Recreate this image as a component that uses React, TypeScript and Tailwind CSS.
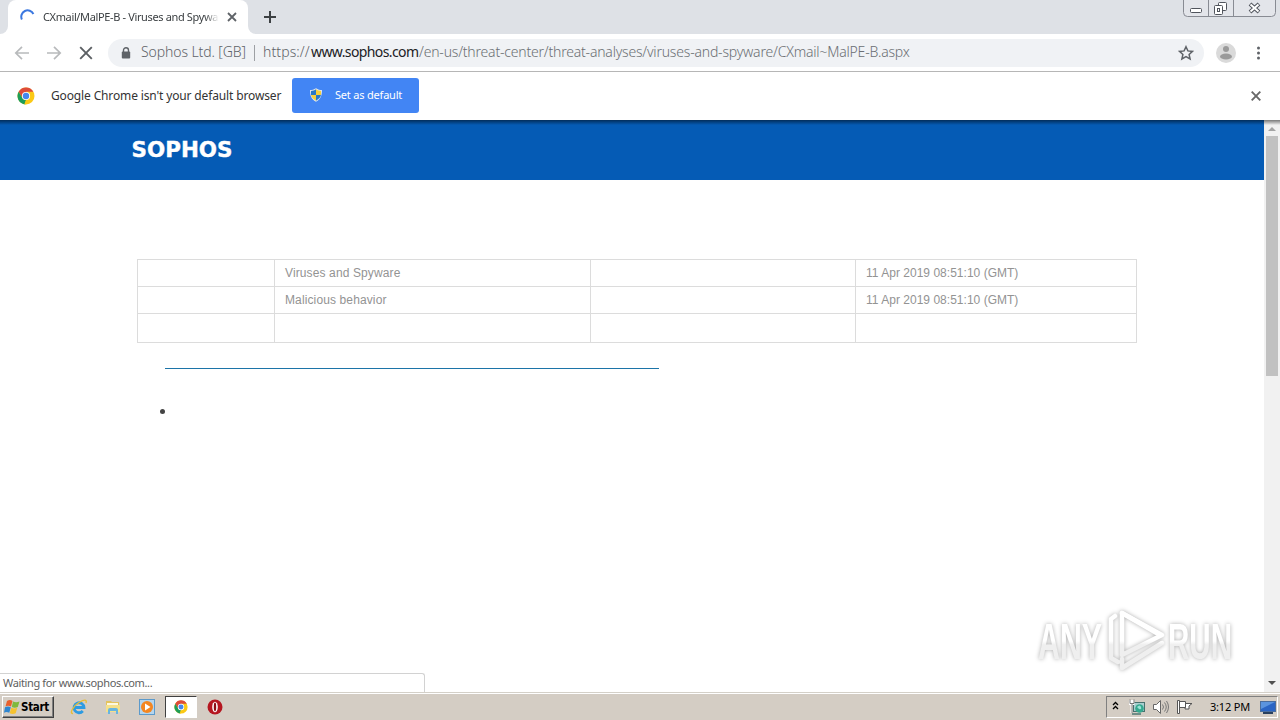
import type { ReactNode } from 'react'

const ROWS = [
    ['', 'Viruses and Spyware', '', '11 Apr 2019 08:51:10 (GMT)'],
    ['', 'Malicious behavior', '', '11 Apr 2019 08:51:10 (GMT)'],
    ['', '', '', ''],
]

export default function App() {
    return (
        <div className="flex h-[720px] w-[1280px] flex-col overflow-hidden bg-white font-['Noto_Sans','DejaVu_Sans',sans-serif]">
            <TabStrip />
            <Toolbar />
            <InfoBar />
            <div className="relative flex h-[572px] shrink-0">
                <Page />
                <Scrollbar />
                <div className="absolute inset-x-0 top-0 h-[5px] bg-linear-to-b from-black/50 to-transparent" />
                <div className="absolute bottom-0 left-0 flex h-[19px] w-[425px] items-center rounded-tr-[3px] border-t border-r border-[#d2d2d2] bg-white pl-[3px] text-[11px] tracking-[-0.37px] whitespace-pre text-[#606060]">
                    Waiting for www.sophos.com...
                </div>
                <Watermark />
            </div>
            <Taskbar />
        </div>
    )
}

function TabStrip() {
    return (
        <div className="flex h-[34px] shrink-0 items-start bg-[#dee1e6]">
            <div className="h-[34px] w-2 bg-white">
                <div className="h-full w-full rounded-br-lg bg-[#dee1e6]" />
            </div>
            <div className="flex h-[34px] w-[240px] items-center rounded-t-lg bg-white pl-3">
                <svg className="h-4 w-4 shrink-0" viewBox="0 0 16 16" fill="none">
                    <path d="M1.9 10.5A6.3 6.3 0 0 1 13.4 5" stroke="#3b78e0" strokeWidth="2" />
                </svg>
                <div className="ml-[7px] w-[176px] overflow-hidden mask-r-from-92% text-[11px] leading-4 tracking-[-0.36px] whitespace-nowrap text-[#3c4043]">
                    CXmail/MalPE-B - Viruses and Spyware
                </div>
                <svg className="ml-[8px] h-[10px] w-[10px] shrink-0" viewBox="0 0 10 10">
                    <path d="M1 1l8 8M9 1l-8 8" stroke="#5f6368" strokeWidth="1.8" />
                </svg>
            </div>
            <div className="h-[34px] w-2 bg-white">
                <div className="h-full w-full rounded-bl-lg bg-[#dee1e6]" />
            </div>
            <svg className="mt-[11px] ml-[8px] h-3 w-3" viewBox="0 0 12 12">
                <path d="M6 0v12M0 6h12" stroke="#3c4043" strokeWidth="2" />
            </svg>
            <svg className="mr-[4px] ml-auto h-[18px] w-[93px]" viewBox="0 0 93 18" fill="none">
                <path d="M.5 0v12.500q0 4 4 4h84q4 0 4-4V0" fill="#e3e5ea" stroke="#888b93" />
                <path d="M25.500 0v16M50.500 0v16" stroke="#888b93" />
                <rect x="7.500" y="8.500" width="11" height="4" rx="1" fill="#fff" stroke="#50545c" />
                <rect x="35.500" y="2.500" width="8" height="8" rx="1" fill="#fff" stroke="#50545c" />
                <rect x="31.500" y="5.500" width="8" height="9" rx="1" fill="#fff" stroke="#50545c" />
                <rect x="34.500" y="8.500" width="2" height="3" stroke="#50545c" />
                <path d="M67 4l9 8M76 4l-9 8" stroke="#50545c" strokeWidth="4" />
                <path d="M67.500 4.400l8 7.200M75.500 4.400l-8 7.200" stroke="#fff" strokeWidth="2" />
            </svg>
        </div>
    )
}

function Toolbar() {
    return (
        <div className="flex h-[38px] shrink-0 items-center border-b border-[#b6b6b6] bg-white">
            <svg className="ml-[14px] h-4 w-[86px] shrink-0" viewBox="0 0 86 16" fill="none">
                <path d="M15 8H2M8 1.800L1.800 8L8 14.200" stroke="#b8babc" strokeWidth="1.700" />
                <path d="M33 8h13M40 1.800L46.200 8L40 14.200" stroke="#b8babc" strokeWidth="1.700" />
                <path d="M66.200 2.200l11.600 11.600M77.800 2.200L66.200 13.800" stroke="#5b5f63" strokeWidth="1.900" />
            </svg>
            <div className="ml-[8px] flex h-7 w-[1096px] items-center rounded-full bg-[#f0f2f5] text-[14px] font-light whitespace-pre text-[#5f6368]">
                <svg className="ml-[13px] h-3 w-[10px] shrink-0" viewBox="0 0 10 12">
                    <path d="M2.500 5V3.200a2.500 2.500 0 0 1 5 0V5" fill="none" stroke="#5f6368" strokeWidth="1.400" />
                    <rect x=".8" y="4.500" width="8.400" height="7" rx="1" fill="#5f6368" />
                </svg>
                <span className="mb-[2px] ml-[10px] w-[106px] tracking-[-0.1px]">Sophos Ltd. [GB]</span>
                <span className="ml-[7px] h-4 w-px bg-[#9da0a4]" />
                <span className="mb-[2px] ml-[8px] w-[48px] tracking-[0.1px]">https://</span>
                <span className="mb-[2px] w-[108px] font-normal tracking-[-0.6px] text-[#202124]">www.sophos.com</span>
                <span className="mb-[2px] tracking-[-0.2px] text-[#6b6f73]">/en-us/threat-center/threat-analyses/viruses-and-spyware/CXmail~MalPE-B.aspx</span>
                <svg className="mr-[10px] ml-auto h-4 w-4 shrink-0" viewBox="0 0 16 16">
                    <path d="M8 1.700l1.900 4.200 4.600.5-3.400 3.100 1 4.500L8 11.700 3.900 14l1-4.500L1.500 6.400l4.600-.5z" fill="none" stroke="#5f6368" strokeWidth="1.500" />
                </svg>
            </div>
            <svg className="ml-[12px] h-5 w-5 shrink-0" viewBox="0 0 20 20">
                <circle cx="10" cy="10" r="10" fill="#dadada" />
                <circle cx="10" cy="6" r="3" fill="#9a9a9a" />
                <ellipse cx="10" cy="13.500" rx="6" ry="3" fill="#9a9a9a" />
            </svg>
            <svg className="ml-[20px] h-[14px] w-1 shrink-0" viewBox="0 0 4 14" fill="#5f6368">
                <circle cx="2.500" cy="2" r="1.500" />
                <circle cx="2.500" cy="7" r="1.500" />
                <circle cx="2.500" cy="12" r="1.500" />
            </svg>
        </div>
    )
}

function InfoBar() {
    return (
        <div className="flex h-12 shrink-0 items-center bg-white">
            <ChromeLogo className="ml-[17px] h-[18px] w-[18px] shrink-0" />
            <span className="ml-[16px] w-[241px] text-[12px] tracking-[-0.14px] whitespace-nowrap text-[#333]">
                Google Chrome isn't your default browser
            </span>
            <button className="mb-[2px] flex h-[35px] w-[127px] items-center rounded-[3px] bg-[#4285f4] text-[11px] tracking-[-0.2px] text-white">
                <svg className="ml-[17px] h-[14px] w-[14px]" viewBox="0 0 14 14">
                    <path d="M7 .3C5 1.700 3 2 1 2c0 5 1 9 6 11.700C12 11 13 7 13 2c-2 0-4-.3-6-1.700z" fill="#dfe7ee" />
                    <path d="M7 1.300C5.500 2.300 4 2.800 2 3v4h5z" fill="#2878c8" />
                    <path d="M7 1.300c1.500 1 3 1.500 5 1.700v4H7z" fill="#f5cf3c" />
                    <path d="M2 7h5v5.700C4 11 2.400 9 2 7z" fill="#f5cf3c" />
                    <path d="M12 7H7v5.700C10 11 11.600 9 12 7z" fill="#2878c8" />
                </svg>
                <span className="ml-[12px] whitespace-nowrap">Set as default</span>
            </button>
            <svg className="mr-[19px] ml-auto h-[10px] w-[10px]" viewBox="0 0 10 10">
                <path d="M.7.700l8.600 8.600M9.300.7L.7 9.300" stroke="#686868" strokeWidth="1.900" />
            </svg>
        </div>
    )
}

function Page() {
    return (
        <div className="h-full w-[1264px] shrink-0 bg-white font-['Liberation_Sans',Arial,sans-serif]">
            <header className="h-[60px] bg-[#055bb5] pt-[18px] pl-[130px]">
                <svg className="h-[24px] w-[110px] overflow-visible" viewBox="0 0 110 24">
                    <text
                        x="1.500"
                        y="18.500"
                        textLength="101"
                        lengthAdjust="spacingAndGlyphs"
                        className="fill-white stroke-white stroke-[0.4px] font-['DejaVu_Sans',sans-serif] text-[22px] font-bold"
                    >
                        SOPHOS
                    </text>
                </svg>
            </header>
            <main className="pt-[79px] pl-[137px]">
                <div className="w-[1000px] border-t border-l border-[#dcdcdc]">
                    {ROWS.map((row, i) => (
                        <div
                            key={i}
                            className={`grid grid-cols-[137px_316px_265px_281px] ${i === 2 ? 'h-[29px]' : 'h-[27px]'}`}
                        >
                            {row.map((cell, j) => (
                                <div
                                    key={j}
                                    className={`flex items-center border-r border-b border-[#dcdcdc] pl-[10px] text-[12px] whitespace-nowrap text-[#939393] ${j === 3 ? 'tracking-[0.02px]' : 'tracking-[0.12px]'}`}
                                >
                                    {cell}
                                </div>
                            ))}
                        </div>
                    ))}
                </div>
                <div className="mt-[25px] ml-[28px] h-px w-[494px] bg-[#1c74a8]" />
                <div className="mt-[40px] ml-[23px] h-[5px] w-[5px] rounded-full bg-[#444]" />
            </main>
        </div>
    )
}

function Scrollbar() {
    return (
        <div className="flex h-full w-4 flex-col items-center bg-[#f1f1f1]">
            <svg className="h-4 w-4 shrink-0" viewBox="0 0 16 16">
                <path d="M4 11h8L8 7z" fill="#a3a3a3" />
            </svg>
            <div className="h-[240px] w-3 bg-[#c1c1c1]" />
            <svg className="mt-auto h-4 w-4 shrink-0" viewBox="0 0 16 16">
                <path d="M4 5h8l-4 4z" fill="#505050" />
            </svg>
        </div>
    )
}

function Watermark() {
    return (
        <svg
            className="absolute top-[484px] left-[1030px] h-[80px] w-[220px] overflow-visible drop-shadow-[0_0_2px_rgba(0,0,0,0.32)]"
            viewBox="0 0 220 80"
        >
            <defs>
                <linearGradient id="fade" x1="0" y1="0" x2="0" y2="74" gradientUnits="userSpaceOnUse">
                    <stop offset="0.5" stopColor="#fff" />
                    <stop offset="0.55" stopColor="#efefef" />
                </linearGradient>
            </defs>
            <g fill="url(#fade)" className="font-['Liberation_Sans',sans-serif] text-[50px] font-bold">
                <text x="8" y="55" textLength="64" lengthAdjust="spacingAndGlyphs">ANY</text>
                <text x="138" y="55" textLength="64" lengthAdjust="spacingAndGlyphs">RUN</text>
            </g>
            <g fill="none" stroke="url(#fade)" strokeWidth="4.500" strokeLinejoin="round" strokeLinecap="round">
                <path d="M92 9v42l40-20z" />
                <path d="M85 12l-4 3v39l7 4M92 9l38 22M92 55v9l40-25" />
            </g>
        </svg>
    )
}

function ChromeLogo({ className }: { className: string }) {
    return (
        <svg className={className} viewBox="0 0 18 18">
            <circle cx="9" cy="9" r="8.500" fill="#fbc915" />
            <path d="M1.600 4.800A8.500 8.500 0 0 1 16.400 4.800H9L5.400 11z" fill="#dd4b3a" />
            <path d="M1.600 4.800L5.400 11a4 4 0 0 0 3.600 2L7.600 17.400A8.500 8.500 0 0 1 1.600 4.800z" fill="#1d9d58" />
            <path d="M9 13l3.600-2-3.800 6.500-1.400-.2z" fill="#fbc915" />
            <circle cx="9" cy="9" r="4.100" fill="#fff" />
            <circle cx="9" cy="9" r="3.200" fill="#4587ed" />
        </svg>
    )
}

function TaskButton({ active, children }: { active?: boolean, children: ReactNode }) {
    return (
        <div
            className={`flex h-[22px] w-[32px] items-center justify-center ${active ? 'border border-t-[#404040] border-r-white border-b-white border-l-[#404040] bg-white' : ''}`}
        >
            {children}
        </div>
    )
}

function Taskbar() {
    return (
        <div className="flex h-7 shrink-0 items-start border-t border-[#d4d0c8] bg-[#d4cdc4] pt-[3px] shadow-[inset_0_1px_0_#fff]">
            <button className="ml-[2px] flex h-[22px] w-[52px] items-center border border-t-white border-r-[#404040] border-b-[#404040] border-l-white bg-[#d4cdc4] font-['DejaVu_Sans_Condensed','DejaVu_Sans',sans-serif] text-[11.500px] font-bold tracking-[-0.300px] text-black shadow-[inset_-1px_-1px_0_#808080]">
                <svg className="ml-px h-4 w-4 shrink-0" viewBox="0 0 16 16">
                    <path d="M3 2q3-2 5.500 0L7 7.500q-3-1.500-5.500 0z" fill="#e9602d" />
                    <path d="M9 2.500q3 1.500 6.500 0l-1.700 5.500q-3 1.500-6 0z" fill="#7fb93c" />
                    <path d="M1 8.200q3-1.500 5.800 0l-1.500 5.500q-3-1.500-5.300 0z" fill="#2f86d0" />
                    <path d="M7.300 8.700q3 1.500 6 0l-1.600 5.600q-3 1.500-6 0z" fill="#f6c22f" />
                </svg>
                <span className="mt-px ml-px">Start</span>
            </button>
            <div className="ml-[9px] flex gap-[2px]">
                <TaskButton>
                    <svg className="h-4 w-[18px]" viewBox="0 0 18 16" fill="none">
                        <path d="M4.500 8.500h9.500a5 5 0 1 0-1.200 3.500" stroke="#2d9be2" strokeWidth="2.800" />
                        <path d="M3 14.500C-1 15 3 7 9 3.500s8-3 7 .5" stroke="#e8bd35" strokeWidth="1.400" />
                    </svg>
                </TaskButton>
                <TaskButton>
                    <svg className="h-4 w-4" viewBox="0 0 16 16">
                        <path d="M1 2h5l1 1h7v10H1z" fill="#e4c35d" />
                        <path d="M2 4h11v2H2z" fill="#fdf8e0" />
                        <path d="M1 6h14v7H1z" fill="#f5e08a" />
                        <path d="M3 15v-4q0-2 2-2h6q2 0 2 2v4h-2v-3H5v3z" fill="#68b5df" />
                    </svg>
                </TaskButton>
                <TaskButton>
                    <svg className="h-4 w-4" viewBox="0 0 16 16">
                        <rect x=".5" y=".5" width="15" height="15" fill="#b5d5ed" stroke="#5c9acb" />
                        <circle cx="8" cy="8" r="6" fill="#f48620" />
                        <path d="M6 4.500v7L11.500 8z" fill="#fff" />
                    </svg>
                </TaskButton>
                <TaskButton active>
                    <ChromeLogo className="h-[14px] w-[14px]" />
                </TaskButton>
                <TaskButton>
                    <svg className="h-4 w-4" viewBox="0 0 16 16">
                        <circle cx="8" cy="8" r="7.500" fill="#b51620" />
                        <ellipse cx="8" cy="8" rx="2.800" ry="5.300" fill="#fff" />
                        <ellipse cx="8" cy="8" rx="1.200" ry="4.400" fill="#8d0d14" />
                    </svg>
                </TaskButton>
            </div>
            <div className="mr-[2px] ml-auto flex h-[22px] w-[172px] items-center border border-t-[#808080] border-r-white border-b-white border-l-[#808080] text-black">
                <svg className="mb-[3px] ml-[5px] h-[9px] w-[7px]" viewBox="0 0 7 9" fill="none">
                    <path d="M1 4l2.500-2.500L6 4M1 8l2.500-2.500L6 8" stroke="#000" strokeWidth="1.300" />
                </svg>
                <svg className="ml-[10px] h-4 w-4" viewBox="0 0 16 16">
                    <rect x="4.500" y="3.500" width="11" height="9" fill="#a9cfd0" stroke="#47716f" />
                    <circle cx="10.500" cy="9.500" r="4.300" fill="#35a98f" />
                    <path d="M8 8q3-3 4 0t-2 2z" fill="#9be3d8" />
                    <path d="M3 15h9" stroke="#4f7775" strokeWidth="1.500" />
                    <path d="M.5 1v4h4V1M2.500 1v13" fill="none" stroke="#fff" strokeWidth="2" />
                    <path d="M1 .5v4h4v-4M3 5v9" fill="none" stroke="#555" strokeWidth=".8" />
                </svg>
                <svg className="ml-[8px] h-4 w-4" viewBox="0 0 16 16" fill="none">
                    <path d="M.5 5.500h3l4-4v13l-4-4h-3z" fill="#fff" stroke="#666" />
                    <path d="M9.500 5.500q2 2.500 0 5M11.500 3.500q3.500 4.500 0 9M13.500 2q4 6 0 12" stroke="#777" />
                </svg>
                <svg className="ml-[8px] h-4 w-4" viewBox="0 0 16 16" fill="#fff" stroke="#555">
                    <path d="M8.500 4.500h6.500l-3 2.500v3H8z" />
                    <path d="M2.500 2.500h6v6h-6z" />
                    <path d="M.5 1.500h2v13h-2z" />
                </svg>
                <span className="ml-[17px] w-[40px] text-[11px] tracking-[-0.2px] whitespace-nowrap">3:12 PM</span>
                <svg className="mt-[2px] ml-[10px] h-[14px] w-4" viewBox="0 0 16 14">
                    <rect x=".5" y=".5" width="15" height="10" fill="#2b65c4" stroke="#4a6d9d" />
                    <path d="M1 1h14L1 8z" fill="#5b94de" />
                    <path d="M3 11h10v2H3z" fill="#29405f" />
                </svg>
            </div>
        </div>
    )
}
